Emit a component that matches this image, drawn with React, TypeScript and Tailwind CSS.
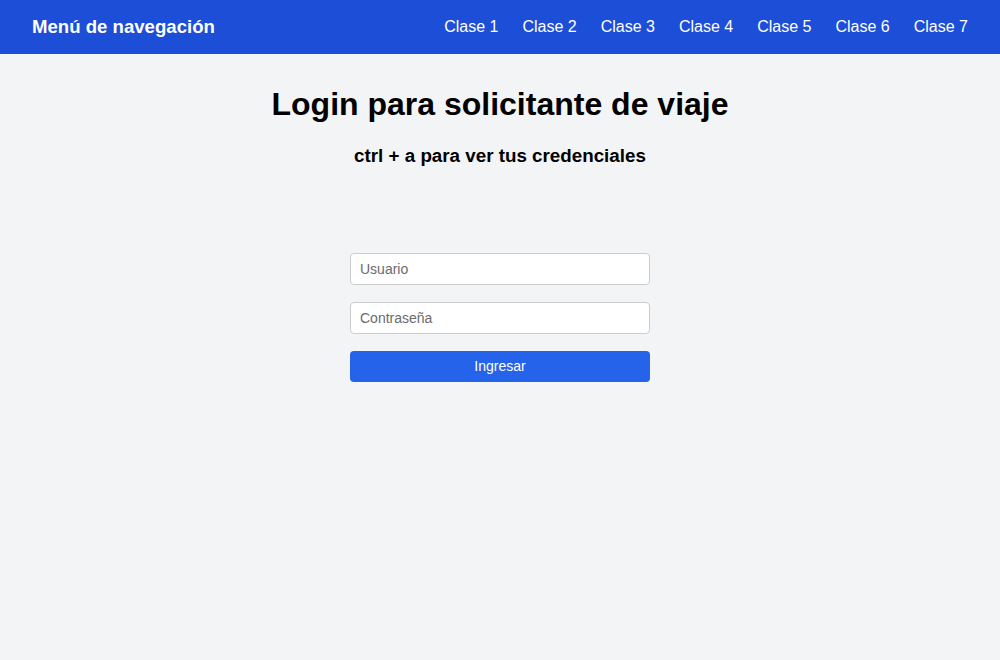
export default function App() {
  const links = ["Clase 1", "Clase 2", "Clase 3", "Clase 4", "Clase 5", "Clase 6", "Clase 7"];
  return (
    <div className="min-h-[660px] bg-[#f3f4f6] font-['Liberation_Sans',Arial,sans-serif] text-black">
      <nav className="flex h-[54px] items-center justify-between bg-[#1d4ed8] px-8 text-white">
        <span className="text-[18.6px] font-bold">Menú de navegación</span>
        <div className="flex gap-6 text-[16px]">
          {links.map((l) => (
            <a key={l} href="#" className="text-white">{l}</a>
          ))}
        </div>
      </nav>
      <div className="flex flex-col items-center">
        <h1 className="mt-[32px] text-[32px] font-bold leading-[37px]">Login para solicitante de viaje</h1>
        <h2 className="mt-[22px] text-[18.8px] font-bold leading-[21px]">ctrl + a para ver tus credenciales</h2>
        <form className="mt-[87px] flex w-[300px] flex-col gap-[17px]">
          <input
            placeholder="Usuario"
            className="h-[32px] w-full rounded-[4px] border border-[#cccccc] bg-white px-[9px] text-[14px] placeholder:text-[#6b6b6b] outline-none"
          />
          <input
            placeholder="Contraseña"
            type="password"
            className="h-[32px] w-full rounded-[4px] border border-[#cccccc] bg-white px-[9px] text-[14px] placeholder:text-[#6b6b6b] outline-none"
          />
          <button type="button" className="h-[31px] w-full rounded-[4px] bg-[#2563eb] text-[14px] text-white">
            Ingresar
          </button>
        </form>
      </div>
    </div>
  );
}
